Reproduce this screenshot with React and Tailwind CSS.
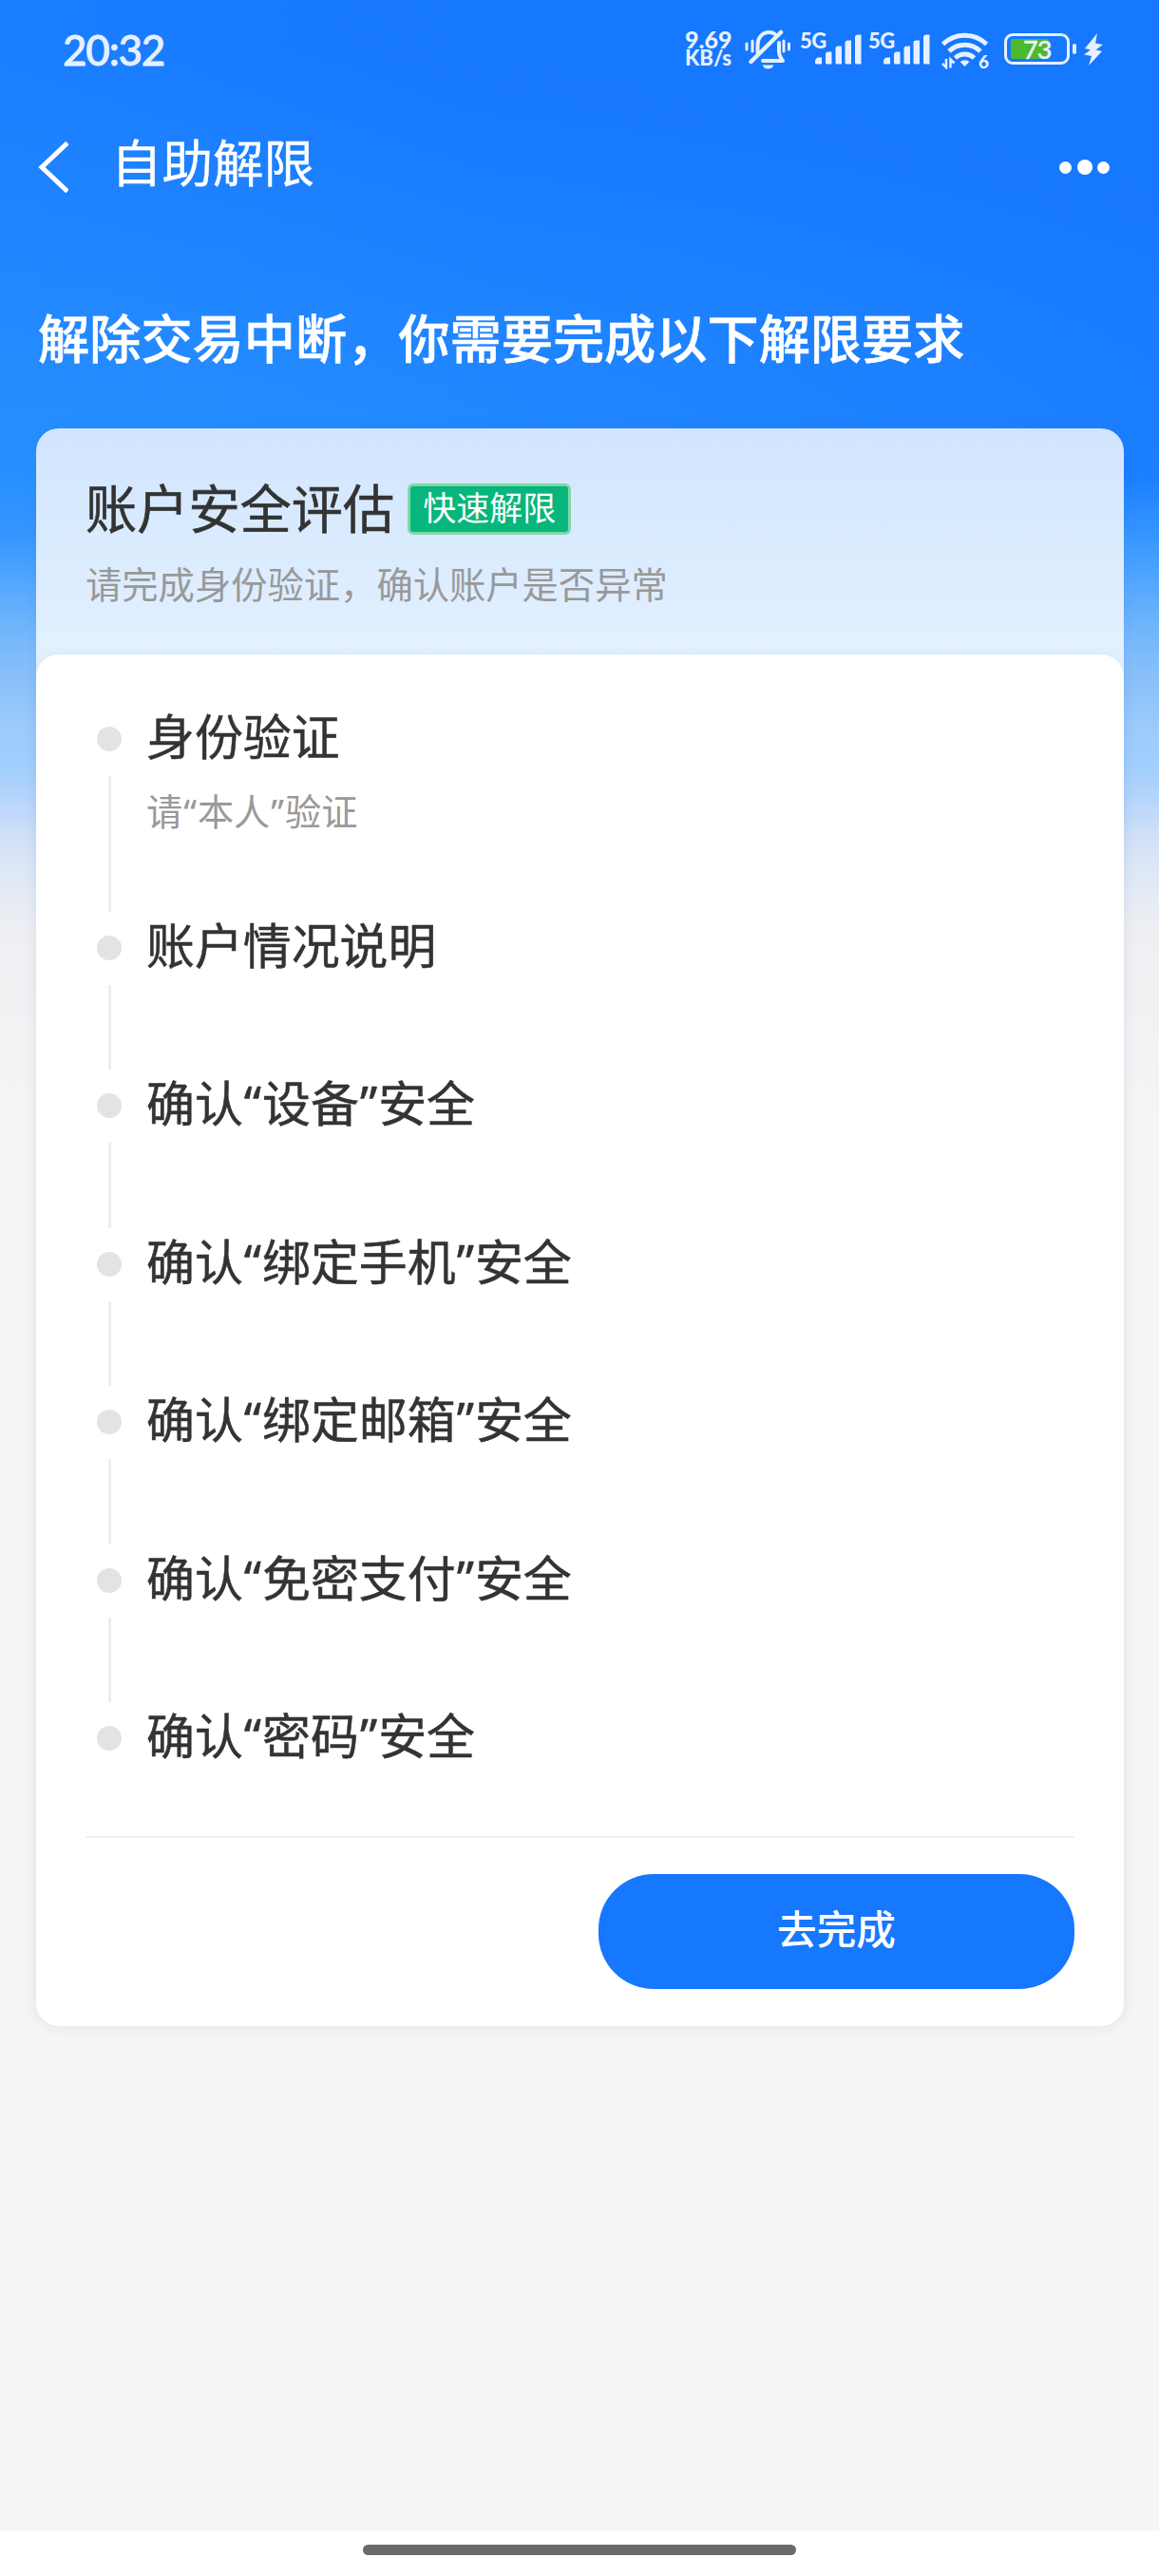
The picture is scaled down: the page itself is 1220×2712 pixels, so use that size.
const steps = [
  { title: '身份验证', desc: '请“本人”验证' },
  { title: '账户情况说明' },
  { title: '确认“设备”安全' },
  { title: '确认“绑定手机”安全' },
  { title: '确认“绑定邮箱”安全' },
  { title: '确认“免密支付”安全' },
  { title: '确认“密码”安全' },
];

const BellOffIcon = () => (
  <svg className="w-12 h-[42px]" viewBox="0 0 48 42" fill="none" stroke="currentColor" strokeLinecap="round">
    <path d="M13.5 24V17c0-8 4.500-14 12-14 2.500 0 4.500.6 6 1.800" strokeWidth="4" />
    <path d="M38 3L6.500 34" strokeWidth="4.500" />
    <path d="M36 14v9c0 4 1 6 4 10H19" strokeWidth="4" strokeLinejoin="round" />
    <path d="M18.500 37.500h12c-1.500 3-3.500 4-6 4s-4.500-1-6-4z" fill="currentColor" stroke="none" />
    <path d="M2 15v6M8 12v11M41 12v11M46.500 15v6" strokeWidth="3" />
  </svg>
);

const Signal = () => (
  <div className="relative w-[65px] h-[34px]">
    <span className="absolute left-0 -top-0.5 text-[22px] leading-[22px] font-black font-[Lato] tracking-[-0.5px]">5G</span>
    <svg className="absolute right-0 bottom-0 w-[49px] h-8" viewBox="0 0 49 32" fill="currentColor">
      <path d="M0 29q0-4.500 4-4.500h3v7H1.500Q0 31.500 0 30z" />
      <path d="M11 21.500q0-3 3-3h3.500v13h-5q-1.500 0-1.500-1.500z" />
      <path d="M21.500 15q0-2.500 3-2.500H28v19h-5q-1.500 0-1.500-1.500z" />
      <path d="M31.500 9q0-2.500 3-2.500H38v25h-5q-1.500 0-1.500-1.500z" />
      <path d="M42 3q0-2.500 3-2.500h3.500v31h-5q-1.500 0-1.500-1.500z" />
    </svg>
  </div>
);

const WifiIcon = () => (
  <div className="relative w-[50px] h-[39px]">
    <svg className="w-[50px] h-[39px]" viewBox="0 0 50 39" fill="none" stroke="currentColor" strokeWidth="5">
      <path d="M1.500 12.500a33 33 0 0 1 46 0" />
      <path d="M8 20a23.500 23.500 0 0 1 33 0" />
      <path d="M14.500 27a14.500 14.500 0 0 1 20 0" />
      <path d="M19.500 31q5-3.500 10 0l-5 5z" fill="currentColor" stroke="none" />
      <path d="M5 28v9L1 33M9.500 37.500v-9l4 4" strokeWidth="2.500" />
    </svg>
    <span className="absolute right-0 -bottom-1 text-[19px] leading-[24px] font-black font-[Lato]">6</span>
  </div>
);

const Battery = () => (
  <div className="flex items-center gap-[3px]">
    <div className="flex items-center w-[69px] h-[33px] p-1 border-[3px] border-current rounded-[9px]">
      <div className="relative w-10 h-[21px] rounded-[2px] bg-[#4db92c]">
        <span className="absolute left-[13px] top-0 text-[27px] leading-[21px] font-medium font-[Lato] tracking-[-1px] [-webkit-text-stroke:0.4px]">73</span>
      </div>
    </div>
    <div className="w-1 h-[11px] rounded-full bg-current"></div>
  </div>
);

const StatusBar = () => (
  <div className="flex items-start justify-between h-[104px] pl-[66px] pr-[59px] pt-[31px] text-[#e6f0ff]">
    <span className="text-[44px] leading-[42px] font-medium font-[Lato] tracking-[-1.2px] [-webkit-text-stroke:0.8px]">20:32</span>
    <div className="flex items-start">
      <div className="w-[53px] font-black font-[Lato]">
        <div className="text-[25px] leading-[20px]">9.69</div>
        <div className="text-[22px] leading-[20px]">KB/s</div>
      </div>
      <div className="ml-2.5"><BellOffIcon /></div>
      <div className="flex gap-[7px] ml-2.5 mt-[3px]">
        <Signal />
        <Signal />
      </div>
      <div className="ml-3 mt-[3px]"><WifiIcon /></div>
      <div className="ml-4 mt-1"><Battery /></div>
      <svg className="ml-2 mt-1 w-5 h-[34px]" viewBox="0 0 20 34" fill="currentColor">
        <path d="M14 0L1 16l6 1.500L0 22.500l8 1.500-3 10 14-15-6.500-1.500L20 12l-8-1.500z" />
      </svg>
    </div>
  </div>
);

const NavBar = () => (
  <div className="flex items-center h-36 pl-10 pr-[52px]">
    <svg className="w-8 h-[54px]" viewBox="0 0 32 54" fill="none" stroke="currentColor" strokeWidth="5">
      <path d="M31 1.500L4 27l27 25.500" />
    </svg>
    <h1 className="ml-[45px] -mt-2 text-[53.500px] leading-none [-webkit-text-stroke:0.4px]">自助解限</h1>
    <div className="flex items-center gap-[5.500px] ml-auto">
      <i className="size-[13px] rounded-full bg-white"></i>
      <i className="size-4 rounded-full bg-white"></i>
      <i className="size-[13px] rounded-full bg-white"></i>
    </div>
  </div>
);

// 引号两侧留一点间距
const Quoted = ({ text }) =>
  text.split(/([“”])/).map((part, i) =>
    part === '“' || part === '”' ? <span key={i} className="mx-px">{part}</span> : part
  );

const Step = ({ title, desc, last }) => (
  <li className={desc ? 'flex h-[220px]' : last ? 'flex h-[140px]' : 'flex h-[166.400px]'}>
    <div className="flex flex-col items-center w-[26px] pt-6">
      <div className="size-[26px] rounded-full bg-[#e3e3e3]"></div>
      {!last && <div className="w-[3px] flex-1 mt-[26px] mb-px bg-[#eeeeee]"></div>}
    </div>
    <div className="ml-[26px]">
      <div className="text-[50.900px] leading-[70px] text-[#333] [-webkit-text-stroke:0.5px]"><Quoted text={title} /></div>
      {desc && <div className="mt-3.5 text-[38.200px] leading-[58px] text-[#999]"><Quoted text={desc} /></div>}
    </div>
  </li>
);

export default function App() {
  return (
    <div
      lang="zh-CN"
      className="flex flex-col w-[1220px] h-[2712px] bg-[#f5f5f5] text-white font-['Noto_Sans','Noto_Sans_CJK_SC',sans-serif] bg-[linear-gradient(to_bottom,transparent_500px,#3495ff_560px,#4ba3ff_600px,#6fb5fb_660px,#86bff9_705px,#9dcbfb_770px,#a3d0fd_810px,#b5d5fb_840px,#d0e0f8_880px,#dfe8f6_920px,#efeff3_980px,#f2f2f4_1080px,#f5f5f5_1180px),radial-gradient(1700px_500px_at_0_540px,#2891ff,transparent),linear-gradient(to_right,#1b7eff,#1677ff_500px)]"
    >
      <StatusBar />
      <NavBar />
      <h2 className="h-[203px] pt-[71px] pl-10 text-[54.200px] leading-[74px] font-medium [-webkit-text-stroke:0.6px]">
        解除交易中断，你需要完成以下解限要求
      </h2>

      <main className="mx-[38px] w-[1145px] h-[1682px] rounded-3xl bg-linear-to-b from-[#d1e5fe] to-[#e3f1ff] to-[238px] shadow-[0_0_16px_rgba(20,80,160,0.05)]">
        <div className="h-[238px] pl-[52px] pt-[45px]">
          <div className="flex items-center h-[78px]">
            <h3 className="text-[54.200px] leading-[74px] text-[#333] [-webkit-text-stroke:0.6px]">账户安全评估</h3>
            <span className="flex items-center justify-center ml-3.5 mt-0.5 w-[172px] h-[54px] pb-[3px] border-[3px] border-[#80d6ac] rounded-md bg-[#06b67c] text-[35px] leading-none">
              快速解限
            </span>
          </div>
          <p className="mt-3 text-[38.300px] leading-[58px] text-[#999]">请完成身份验证，确认账户是否异常</p>
        </div>

        <section className="flex flex-col h-[1444px] px-[52px] pt-[52px] rounded-3xl bg-white shadow-[0_0_14px_rgba(20,80,160,0.06)]">
          <ul className="ml-3">
            {steps.map((step, i) => (
              <Step key={step.title} {...step} last={i === steps.length - 1} />
            ))}
          </ul>
          <div className="h-0.5 bg-[#f2f2f2]"></div>
          <button className="self-end mt-[38px] w-[501px] h-[121px] pb-1 rounded-[58px] bg-[#1677ff] text-[41.600px] font-medium">
            去完成
          </button>
        </section>
      </main>

      <div className="flex justify-center h-12 mt-auto pt-[15px] bg-white">
        <div className="w-[456px] h-[11px] rounded-full bg-[#6a6a6a]"></div>
      </div>
    </div>
  );
}
